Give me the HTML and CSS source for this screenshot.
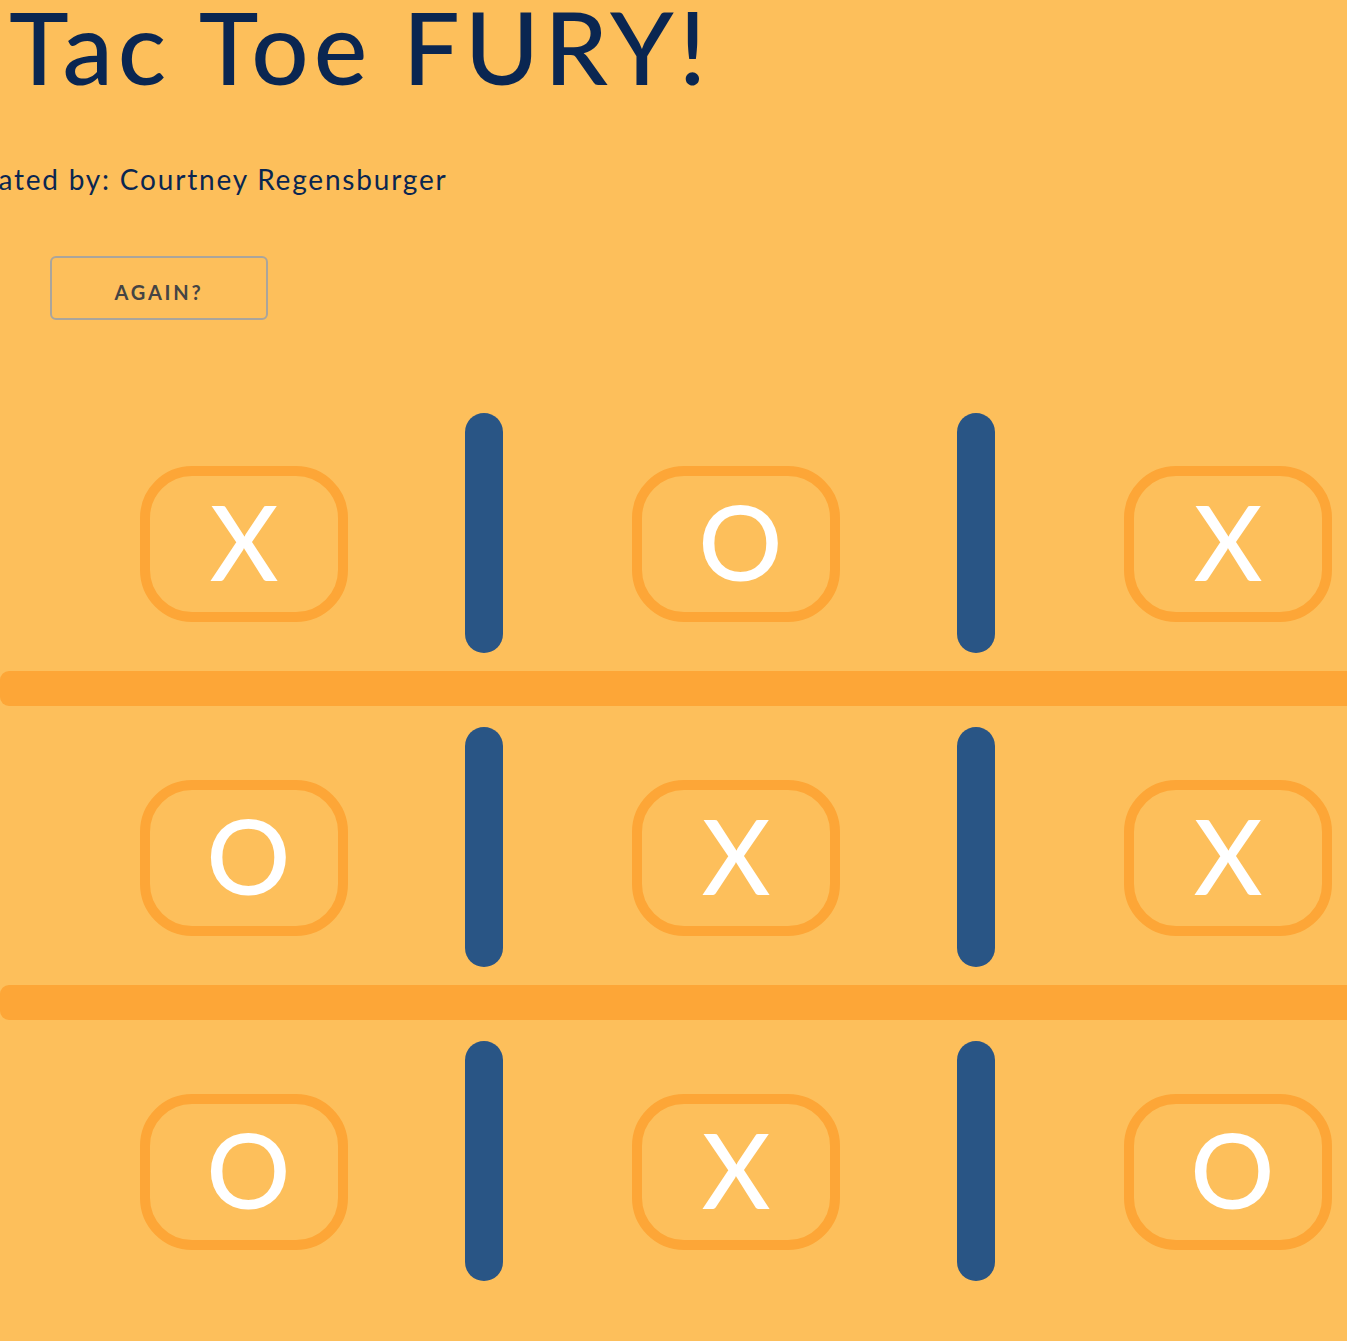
FILE: index.html
```html
<!DOCTYPE html>
<html lang="en">
<head>
<meta charset="utf-8">
<title>Tic Tac Toe FURY!</title>
<link rel="stylesheet" href="styles.css">
</head>
<body>
<header class="intro">
  <h1 class="title">Tic Tac Toe FURY!</h1>
  <p class="credit">Created by: Courtney Regensburger</p>
  <button class="again" type="button">AGAIN?</button>
</header>
<main class="board">
  <div class="row">
    <div class="cell">X</div><div class="post"></div>
    <div class="cell o">O</div><div class="post"></div>
    <div class="cell">X</div>
  </div>
  <div class="rail"></div>
  <div class="row">
    <div class="cell o">O</div><div class="post"></div>
    <div class="cell">X</div><div class="post"></div>
    <div class="cell">X</div>
  </div>
  <div class="rail"></div>
  <div class="row">
    <div class="cell o">O</div><div class="post"></div>
    <div class="cell">X</div><div class="post"></div>
    <div class="cell o">O</div>
  </div>
</main>
</body>
</html>
```
FILE: styles.css
```css
html {
  overflow: hidden;
  background: #fdbf5b;
}
body {
  margin: 0;
  background: #fdbf5b;
  font-family: "Lato", "Noto Sans", sans-serif;
}
.intro {
  display: flex;
  flex-direction: column;
  align-items: flex-start;
}
.title {
  margin: -4px 0 0 -166px;
  font-size: 101px;
  line-height: 100px;
  font-weight: 500;
  letter-spacing: 5px;
  color: #0a2651;
  white-space: nowrap;
}
.credit {
  margin: 67px 0 0 -50px;
  font-size: 28px;
  line-height: 32px;
  letter-spacing: 1.8px;
  color: #0a2651;
  white-space: nowrap;
}
.again {
  margin: 61px 0 0 50px;
  width: 218px;
  height: 64px;
  box-sizing: border-box;
  border: 2px solid #aaa59c;
  border-radius: 6px;
  background: transparent;
  font-family: "Lato", sans-serif;
  font-weight: 700;
  font-size: 20px;
  letter-spacing: 2.8px;
  color: #454444;
  padding: 8px 0 0;
}
.board {
  margin-top: 93px;
}
.row {
  display: flex;
  height: 240px;
  padding-left: 140px;
}
.cell {
  box-sizing: border-box;
  width: 208px;
  height: 156px;
  margin-top: 53px;
  border: 10px solid #fda637;
  border-radius: 52px;
  display: flex;
  align-items: center;
  justify-content: center;
  padding-bottom: 8px;
  color: #ffffff;
  font-size: 105px;
  line-height: 1;
  font-weight: 500;
}
.cell.o {
  padding-left: 9px;
}
.post {
  width: 38px;
  height: 240px;
  margin: 0 129px 0 117px;
  border-radius: 19px;
  background: #295585;
  flex-shrink: 0;
}
.rail {
  width: 1500px;
  height: 35px;
  margin: 18px 0 21px;
  border-radius: 9px;
  background: #fda637;
}
```
